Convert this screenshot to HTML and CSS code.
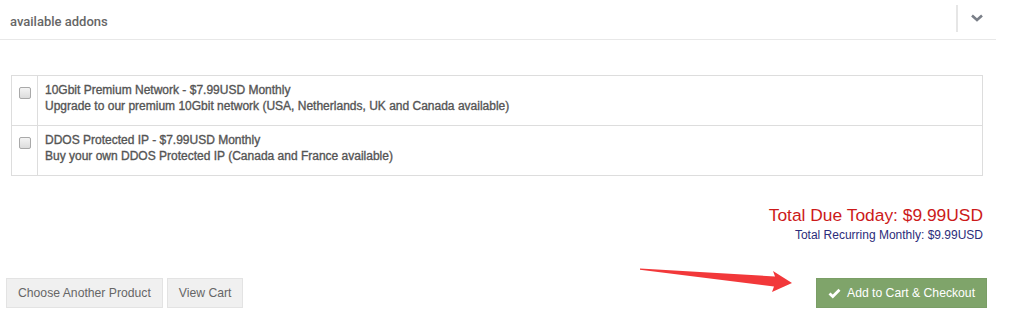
FILE: index.html
```html
<!DOCTYPE html>
<html lang="en">

<head>
    <meta charset="UTF-8">
    <meta name="viewport" content="width=device-width, initial-scale=1.0">
    <title>Configure Product</title>
    <link rel="stylesheet" href="styles.css">
</head>

<body>
    <div class="addons-header">
        <span class="addons-title">available addons</span>
        <div class="addons-toggle">
            <svg width="14" height="10" viewBox="0 0 14 10">
                <polyline points="2,2.5 7,7 12,2.5" fill="none" stroke="#7a7f88" stroke-width="2.6" />
            </svg>
        </div>
    </div>

    <!-- Addon list -->
    <table class="addons">
        <tr>
            <td class="check"><input type="checkbox"></td>
            <td class="desc">
                10Gbit Premium Network - $7.99USD Monthly<br>
                Upgrade to our premium 10Gbit network (USA, Netherlands, UK and Canada available)
            </td>
        </tr>
        <tr>
            <td class="check"><input type="checkbox"></td>
            <td class="desc">
                DDOS Protected IP - $7.99USD Monthly<br>
                Buy your own DDOS Protected IP (Canada and France available)
            </td>
        </tr>
    </table>

    <div class="totals">
        <div class="total-due">Total Due Today: $9.99USD</div>
        <div class="total-recurring">Total Recurring Monthly: $9.99USD</div>
    </div>

    <div class="actions">
        <div class="actions-left">
            <a href="#" class="btn">Choose Another Product</a>
            <a href="#" class="btn">View Cart</a>
        </div>
        <a href="#" class="btn btn-checkout">
            <svg width="13" height="11" viewBox="0 0 13 11">
                <polyline points="1.5,5.5 4.8,8.6 11.5,1.8" fill="none" stroke="#fff" stroke-width="2.8" />
            </svg>
            Add to Cart &amp; Checkout
        </a>
    </div>

    <!-- annotation arrow -->
    <svg class="arrow" width="1024" height="335" viewBox="0 0 1024 335">
        <polygon points="640,268.5 775,276.5 773,271 792,283 772,292 774,286.5 640,269.8" fill="#f2383a" />
    </svg>
</body>

</html>
```

FILE: styles.css
```css
body {
    margin: 0;
    font-family: "Liberation Sans", Arial, sans-serif;
    background: #fff;
    color: #555;
    position: relative;
    height: 335px;
    overflow: hidden;
}

.addons-header {
    width: 996px;
    height: 39px;
    border-bottom: 1px solid #e8e8e8;
    display: flex;
    align-items: center;
    justify-content: space-between;
}

.addons-title {
    padding: 3px 0 0 10px;
    font-family: Roboto, sans-serif;
    font-size: 13px;
    font-weight: 500;
    color: #666;
}

.addons-toggle {
    width: 38px;
    height: 27px;
    border-left: 2px solid #e6e6e6;
    display: flex;
    align-items: center;
    justify-content: center;
    margin-top: -3px;
}

table.addons {
    margin: 35px 0 0 11px;
    width: 972px;
    border-collapse: collapse;
    border: 1px solid #ddd;
}

table.addons td {
    border: 1px solid #ddd;
    vertical-align: top;
    height: 50px;
    box-sizing: border-box;
}

table.addons td.check {
    width: 26px;
    padding: 9px 0 0 0;
    text-align: center;
}

table.addons td.desc {
    padding: 6px 8px 10px 7px;
    font-size: 12px;
    line-height: 16px;
    color: #555;
    -webkit-text-stroke: 0.35px #555;
}

input[type="checkbox"] {
    appearance: none;
    margin: 0;
    width: 12px;
    height: 12px;
    border: 1px solid #a9a9a9;
    border-radius: 2px;
    background: linear-gradient(#f4f4f4, #dcdcdc);
}

.totals {
    width: 983px;
    text-align: right;
    margin-top: 28px;
}

.total-due {
    font-size: 17.4px;
    line-height: 22px;
    color: #cc1a1a;
}

.total-recurring {
    font-size: 12px;
    line-height: 16px;
    margin-top: 1px;
    color: #2c2c7a;
}

.actions {
    width: 981px;
    margin: 35px 0 0 6px;
    display: flex;
    justify-content: space-between;
}

.actions-left {
    display: flex;
    gap: 4px;
}

.btn {
    display: inline-block;
    box-sizing: border-box;
    height: 30px;
    line-height: 28px;
    padding: 0 11px;
    font-size: 12.2px;
    color: #666;
    background: #f0f0f0;
    border: 1px solid #e3e3e3;
    text-decoration: none;
    white-space: nowrap;
}

.btn-checkout {
    width: 171px;
    padding: 0 0 0 11px;
    margin-left: auto;
    background: #7fa46a;
    border-color: #7a9e66;
    color: #fff;
    display: flex;
    align-items: center;
    gap: 6px;
}

.arrow {
    position: absolute;
    left: 0;
    top: 0;
    pointer-events: none;
}
```
